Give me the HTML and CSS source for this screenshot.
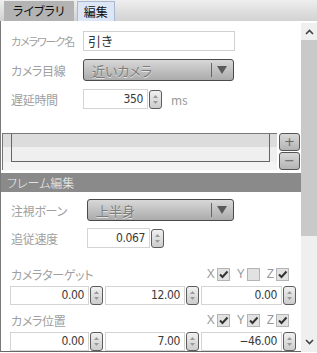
FILE: index.html
```html
<!DOCTYPE html>
<html lang="ja">
<head>
  <meta charset="UTF-8">
  <title>カメラワーク編集</title>
  <link rel="stylesheet" href="styles.css">
</head>
<body>
  <div class="window">
    <!-- Tabs -->
    <div class="tabbar">
      <div class="tab">ライブラリ</div>
      <div class="tab active">編集</div>
    </div>

    <div class="content">
      <div class="panel">
        <div class="field">
          <span class="label tight">カメラワーク名</span>
          <div class="text-input">引き</div>
        </div>

        <div class="field field-select">
          <span class="label">カメラ目線</span>
          <div class="select">
            <span class="select-value">近いカメラ</span>
            <span class="select-divider"></span>
            <span class="select-arrow"></span>
          </div>
        </div>

        <div class="field field-num">
          <span class="label">遅延時間</span>
          <div class="num w-delay">350</div>
          <div class="spin"><svg width="7" height="11" viewBox="0 0 7 11"><path d="M1 4 L3.5 1 L6 4 Z M1 7 L3.5 10 L6 7 Z" fill="#9a9a9a"/></svg></div>
          <span class="unit">ms</span>
        </div>

        <!-- Keyframe list -->
        <div class="list">
          <div class="list-box">
            <div class="list-inner"></div>
          </div>
          <div class="list-btns">
            <div class="btn">+</div>
            <div class="btn">&minus;</div>
          </div>
        </div>

        <div class="section">フレーム編集</div>

        <div class="field field-select sec2">
          <span class="label">注視ボーン</span>
          <div class="select">
            <span class="select-value">上半身</span>
            <span class="select-divider"></span>
            <span class="select-arrow"></span>
          </div>
        </div>

        <div class="field field-num sec2">
          <span class="label">追従速度</span>
          <div class="num w-speed">0.067</div>
          <div class="spin"><svg width="7" height="11" viewBox="0 0 7 11"><path d="M1 4 L3.5 1 L6 4 Z M1 7 L3.5 10 L6 7 Z" fill="#9a9a9a"/></svg></div>
        </div>

        <!-- Target -->
        <div class="axis-row first">
          <span class="label">カメラターゲット</span>
          <div class="axes">
            <span class="axis">X<span class="check on"><svg width="11" height="11" viewBox="0 0 11 11"><path d="M2 5.5 L4.5 8 L9.5 2.5" fill="none" stroke="#333" stroke-width="2"/></svg></span></span>
            <span class="axis">Y<span class="check"></span></span>
            <span class="axis">Z<span class="check on"><svg width="11" height="11" viewBox="0 0 11 11"><path d="M2 5.5 L4.5 8 L9.5 2.5" fill="none" stroke="#333" stroke-width="2"/></svg></span></span>
          </div>
        </div>
        <div class="triple">
          <div class="group"><div class="num">0.00</div><div class="spin"><svg width="7" height="11" viewBox="0 0 7 11"><path d="M1 4 L3.5 1 L6 4 Z M1 7 L3.5 10 L6 7 Z" fill="#9a9a9a"/></svg></div></div>
          <div class="group"><div class="num">12.00</div><div class="spin"><svg width="7" height="11" viewBox="0 0 7 11"><path d="M1 4 L3.5 1 L6 4 Z M1 7 L3.5 10 L6 7 Z" fill="#9a9a9a"/></svg></div></div>
          <div class="group"><div class="num">0.00</div><div class="spin"><svg width="7" height="11" viewBox="0 0 7 11"><path d="M1 4 L3.5 1 L6 4 Z M1 7 L3.5 10 L6 7 Z" fill="#9a9a9a"/></svg></div></div>
        </div>

        <!-- Position -->
        <div class="axis-row">
          <span class="label">カメラ位置</span>
          <div class="axes">
            <span class="axis">X<span class="check on"><svg width="11" height="11" viewBox="0 0 11 11"><path d="M2 5.5 L4.5 8 L9.5 2.5" fill="none" stroke="#333" stroke-width="2"/></svg></span></span>
            <span class="axis">Y<span class="check on"><svg width="11" height="11" viewBox="0 0 11 11"><path d="M2 5.5 L4.5 8 L9.5 2.5" fill="none" stroke="#333" stroke-width="2"/></svg></span></span>
            <span class="axis">Z<span class="check on"><svg width="11" height="11" viewBox="0 0 11 11"><path d="M2 5.5 L4.5 8 L9.5 2.5" fill="none" stroke="#333" stroke-width="2"/></svg></span></span>
          </div>
        </div>
        <div class="triple">
          <div class="group"><div class="num">0.00</div><div class="spin"><svg width="7" height="11" viewBox="0 0 7 11"><path d="M1 4 L3.5 1 L6 4 Z M1 7 L3.5 10 L6 7 Z" fill="#9a9a9a"/></svg></div></div>
          <div class="group"><div class="num">7.00</div><div class="spin"><svg width="7" height="11" viewBox="0 0 7 11"><path d="M1 4 L3.5 1 L6 4 Z M1 7 L3.5 10 L6 7 Z" fill="#9a9a9a"/></svg></div></div>
          <div class="group"><div class="num">&minus;46.00</div><div class="spin"><svg width="7" height="11" viewBox="0 0 7 11"><path d="M1 4 L3.5 1 L6 4 Z M1 7 L3.5 10 L6 7 Z" fill="#9a9a9a"/></svg></div></div>
        </div>
      </div>

      <!-- Scrollbar -->
      <div class="scrollbar">
        <div class="sb-arrow"><svg width="9" height="6" viewBox="0 0 9 6"><path d="M1 5 L4.5 1.5 L8 5" fill="none" stroke="#444" stroke-width="1.6"/></svg></div>
        <div class="sb-thumb"></div>
        <div class="sb-track"></div>
        <div class="sb-arrow down"><svg width="9" height="6" viewBox="0 0 9 6"><path d="M1 1 L4.5 4.5 L8 1" fill="none" stroke="#444" stroke-width="1.6"/></svg></div>
      </div>
    </div>
  </div>
</body>
</html>
```

FILE: styles.css
```css
/* Reset */
* {
  margin: 0;
  padding: 0;
  box-sizing: border-box;
}

body {
  font-family: "Noto Sans CJK JP", sans-serif;
  font-size: 12px;
  font-feature-settings: "palt";
  background-color: #fff;
  color: #333;
}

.window {
  width: 317px;
  height: 353px;
  display: flex;
  flex-direction: column;
  overflow: hidden;
}

/* Tabs */
.tabbar {
  height: 21px;
  flex: none;
  display: flex;
  align-items: flex-end;
  gap: 3px;
  padding-left: 4px;
  background: linear-gradient(#eeeeee, #d2d2d2);
}

.tab {
  height: 20px;
  line-height: 19px;
  padding: 0 9px;
  font-size: 12px;
  color: #111;
  background-color: #b3b3b3;
}

.tab.active {
  padding: 0 6px;
  background-color: #dce6f5;
  border: 1px solid #a8b8d2;
  border-bottom: none;
}

.content {
  height: 331px;
  display: flex;
}

/* Main panel */
.panel {
  flex: 1;
  padding-top: 10px;
  border-left: 1px solid #7a7a7a;
  border-bottom: 1px solid #666;
}

.field {
  display: flex;
  align-items: center;
  height: 20px;
  padding-left: 10px;
}

.field-select {
  height: 22px;
  margin-top: 8px;
}

.field-num {
  margin-top: 8px;
}

.label {
  width: 72px;
  flex: none;
  color: #a0a0a0;
  font-size: 12px;
  letter-spacing: -0.3px;
  white-space: nowrap;
}

.label.tight {
  font-size: 11px;
  letter-spacing: -1.1px;
}

.sec2 .label {
  width: 76px;
}

.text-input {
  width: 152px;
  height: 20px;
  line-height: 18px;
  padding-left: 4px;
  border: 1px solid #d0d0d0;
  color: #333;
  font-size: 13px;
}

.select {
  width: 151px;
  height: 22px;
  display: flex;
  align-items: center;
  padding: 0 6px 0 8px;
  border: 1px solid #4a4a4a;
  border-radius: 3px;
  background: linear-gradient(#d8d8d8, #ababab);
  color: #7c7c7c;
  font-size: 13px;
  text-shadow: 0 1px 0 #e4e4e4;
}

.sec2 .select {
  width: 147px;
}

.select-value {
  flex: 1;
}

.select-divider {
  width: 1px;
  height: 14px;
  margin-right: 5px;
  background-color: #666;
}

.select-arrow {
  width: 0;
  height: 0;
  border-left: 5px solid transparent;
  border-right: 5px solid transparent;
  border-top: 8px solid #5a5a5a;
}

.num {
  height: 20px;
  line-height: 18px;
  padding-right: 4px;
  border: 1px solid #d4d4d4;
  text-align: right;
  font-family: "Liberation Sans Narrow", "DejaVu Sans Condensed", "DejaVu Sans", sans-serif;
  font-stretch: condensed;
  font-size: 12px;
  letter-spacing: -0.4px;
  color: #3a3a3a;
}

.w-delay {
  width: 65px;
}

.w-speed {
  width: 63px;
}

.spin {
  width: 13px;
  height: 19px;
  margin-left: 1px;
  display: flex;
  align-items: center;
  justify-content: center;
  border: 1px solid #5c5c5c;
  border-radius: 3px;
  background: linear-gradient(#f0f0f0, #cccccc);
}

.unit {
  margin-left: 9px;
  color: #999;
}

/* Keyframe list */
.list {
  display: flex;
  margin-top: 24px;
  margin-left: 1px;
}

.list-box {
  width: 275px;
  height: 37px;
  padding: 0 7px 0 8px;
  border-top: 1px solid #777;
  border-left: 1px solid #777;
  background: linear-gradient(#dcdcdc 0 13px, #efefef 13px 28px, #f4f4f4 28px);
}

.list-inner {
  height: 28px;
  border-left: 1px solid #666;
  border-right: 1px solid #666;
  border-bottom: 1px solid #666;
}

.list-btns {
  display: flex;
  flex-direction: column;
  gap: 1px;
  margin-left: 2px;
}

.btn {
  width: 21px;
  height: 18px;
  line-height: 16px;
  text-align: center;
  border: 1px solid #555;
  border-radius: 3px;
  background: linear-gradient(#d8d8d8, #b4b4b4);
  color: #666;
  font-family: "DejaVu Sans", sans-serif;
  font-size: 13px;
}

/* Section header */
.section {
  height: 19px;
  margin-top: 3px;
  padding-left: 6px;
  line-height: 19px;
  background-color: #8a8a8a;
  color: #f2f2f2;
  font-size: 12px;
  font-weight: 300;
}

.section + .field-select {
  margin-top: 7px;
}

.sec2.field-num {
  margin-top: 7px;
}

/* XYZ rows */
.axis-row {
  height: 16px;
  margin-top: 7px;
  padding: 0 12px 0 10px;
  display: flex;
  align-items: center;
  justify-content: space-between;
}

.axis-row.first {
  margin-top: 18px;
}

.axis-row .label {
  width: auto;
}

.axes {
  display: flex;
  gap: 7px;
}

.axis {
  display: flex;
  align-items: center;
  gap: 2px;
  color: #999;
  font-family: "Liberation Sans", sans-serif;
  font-size: 12px;
}

.check {
  width: 13px;
  height: 13px;
  display: flex;
  align-items: center;
  justify-content: center;
  border: 1px solid #b4b4b4;
  background-color: #e2e2e2;
}

.triple {
  display: flex;
  gap: 2px;
  margin-top: 4px;
  padding-left: 9px;
}

.triple .group {
  display: flex;
}

.triple .group:first-child .num {
  width: 79px;
}

.triple .num {
  width: 80px;
  height: 19px;
  line-height: 17px;
}

.triple .group:last-child .num {
  width: 81px;
}

/* Scrollbar */
.scrollbar {
  width: 16px;
  margin-top: 2px;
  display: flex;
  flex-direction: column;
  background-color: #efefef;
}

.sb-arrow {
  height: 17px;
  display: flex;
  align-items: center;
  justify-content: center;
}

.sb-thumb {
  height: 196px;
  background-color: #c9c9c9;
}

.sb-track {
  flex: 1;
}

.sb-arrow.down {
  height: 20px;
}
```
